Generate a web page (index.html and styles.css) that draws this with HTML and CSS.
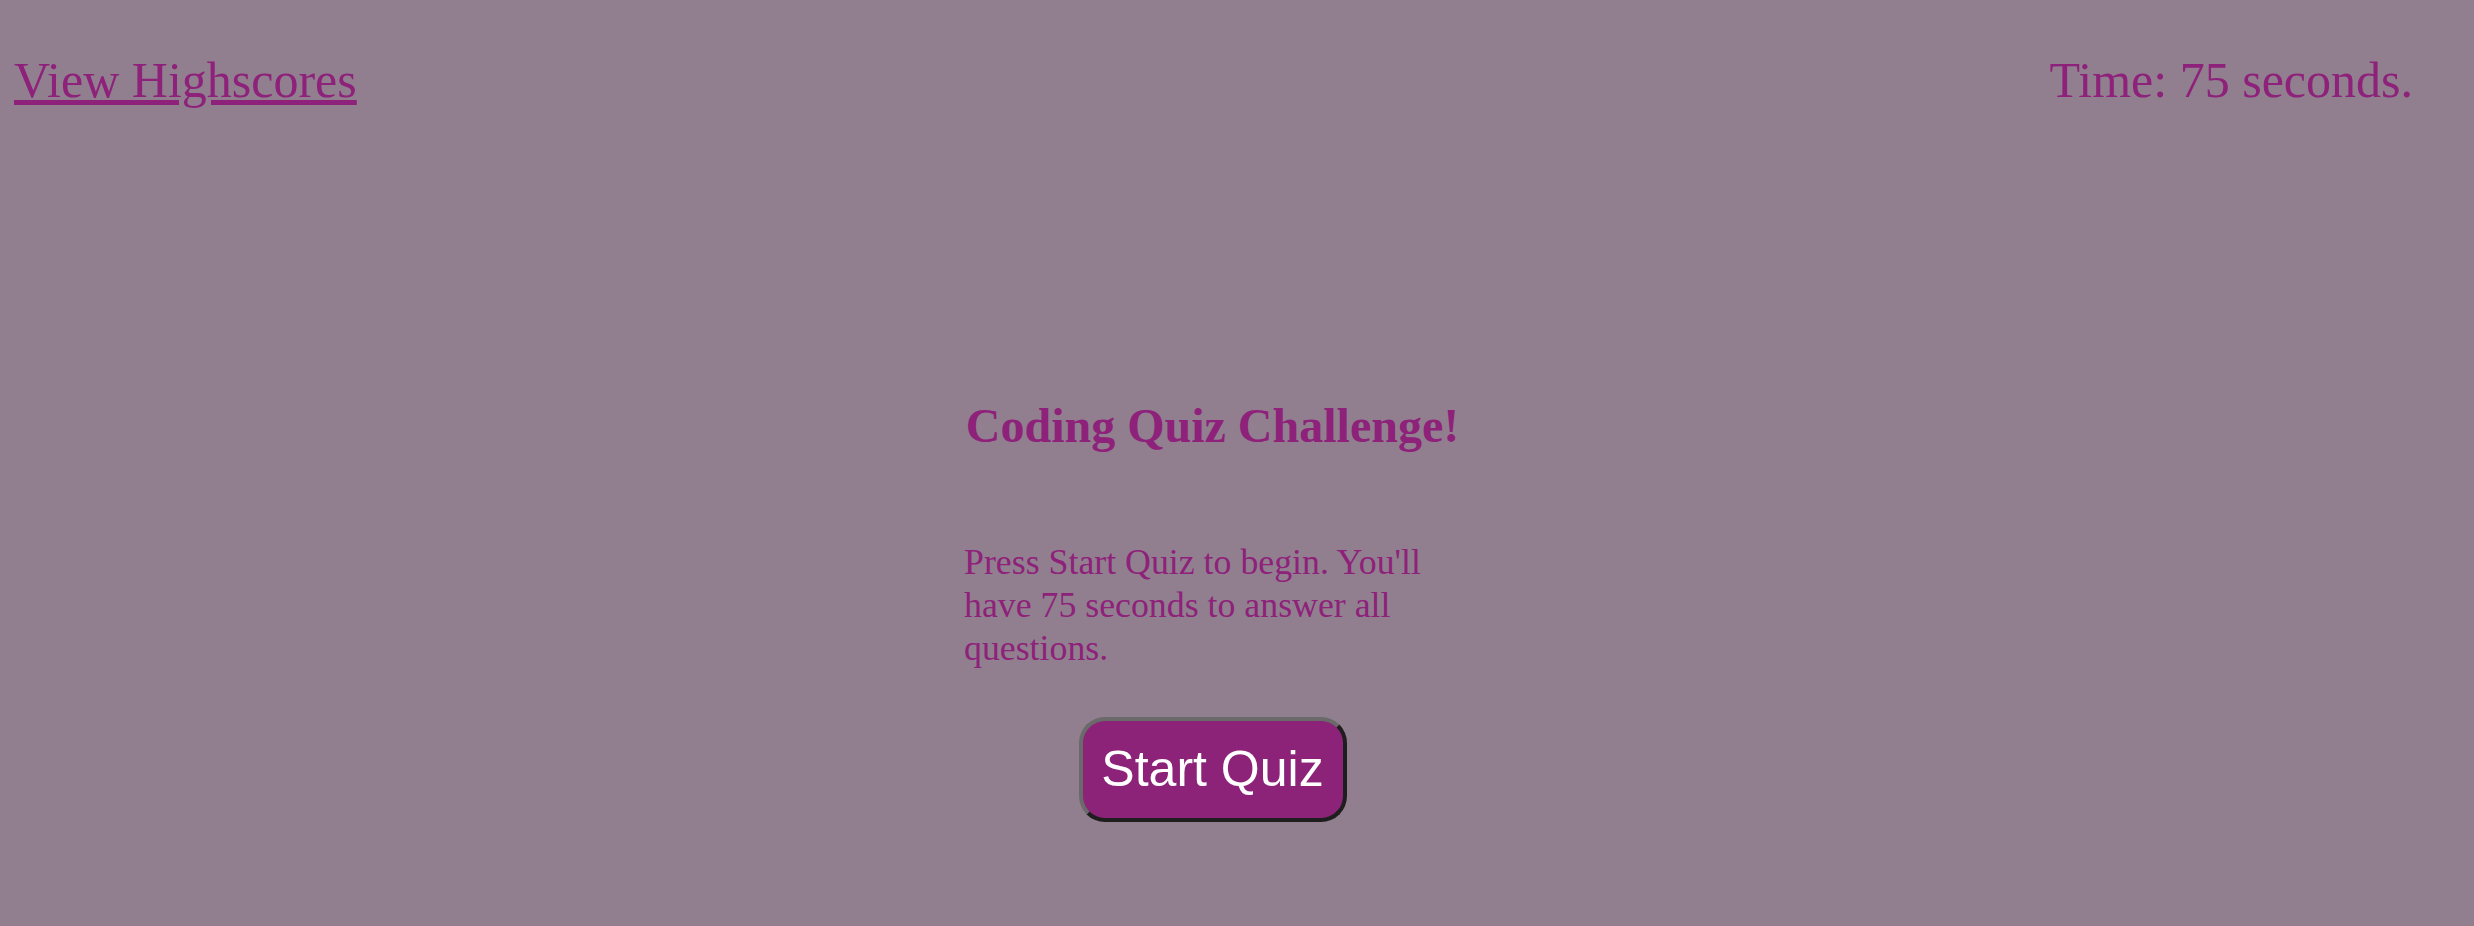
FILE: index.html
```html
<!DOCTYPE html>
<html lang="en">
<head>
<meta charset="utf-8">
<title>Coding Quiz</title>
<link rel="stylesheet" href="styles.css">
</head>
<body>
<header class="topbar">
  <a class="highscores" href="#">View Highscores</a>
  <div class="timer">Time: 75 seconds.</div>
</header>
<main class="stage">
  <section class="card">
    <h2 class="title">Coding Quiz Challenge!</h2>
    <p class="intro">Press Start Quiz to begin. You'll have 75 seconds to answer all questions.</p>
    <button class="start" type="button">Start Quiz</button>
  </section>
</main>
</body>
</html>
```
FILE: styles.css
```css
html, body {
  margin: 0;
  padding: 0;
}
body {
  background: #917f8f;
  color: #8e217a;
  font-family: "Liberation Serif", "Times New Roman", serif;
  min-height: 926px;
}
.topbar {
  display: flex;
  justify-content: space-between;
  align-items: baseline;
  padding: 52px 61px 0 14px;
  font-size: 50px;
  line-height: 1.15;
}
.highscores {
  color: #8e217a;
  text-decoration: underline;
}
.timer {
  color: #8e217a;
}
.stage {
  display: flex;
  justify-content: center;
  padding-right: 49px;
  padding-top: 288px;
}
.card {
  width: 497px;
  display: flex;
  flex-direction: column;
  align-items: center;
}
.title {
  margin: 0;
  font-size: 48px;
  font-weight: bold;
  line-height: 1.15;
  text-align: center;
}
.intro {
  align-self: stretch;
  margin: 88px 0 0 0;
  font-size: 35.8px;
  line-height: 43px;
}
.start {
  margin: 47px 0 0 0;
  width: 268px;
  height: 105px;
  background: #8c2379;
  color: #ffffff;
  font-family: "Liberation Sans", Arial, sans-serif;
  font-size: 50px;
  border: 4px solid #6a6a6a;
  border-color: #6a6a6a #1e1e1e #1e1e1e #6a6a6a;
  border-radius: 26px;
  padding: 0;
}
```
